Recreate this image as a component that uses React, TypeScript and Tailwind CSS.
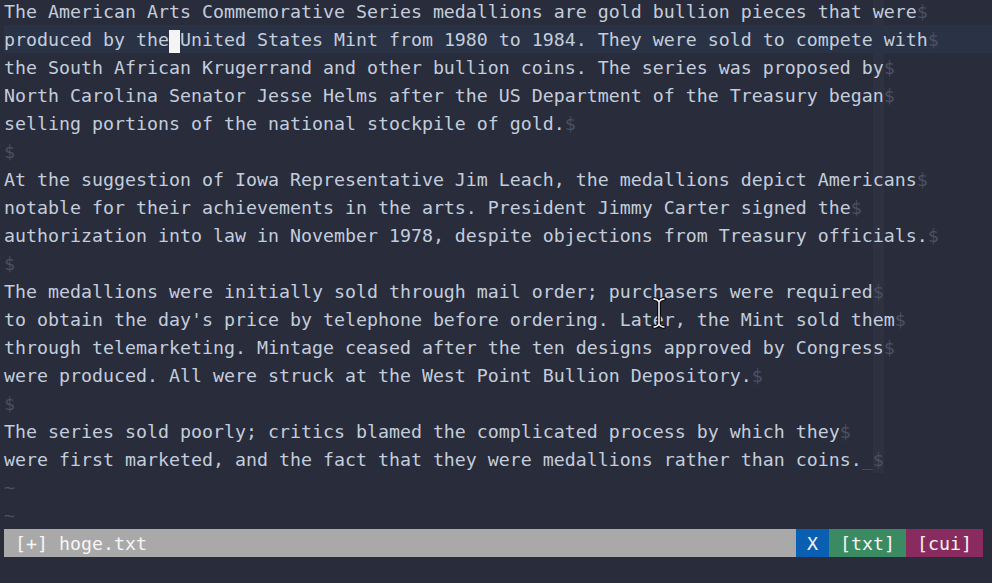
import React from 'react';

const lines: string[] = [
  'The American Arts Commemorative Series medallions are gold bullion pieces that were',
  'produced by the United States Mint from 1980 to 1984. They were sold to compete with',
  'the South African Krugerrand and other bullion coins. The series was proposed by',
  'North Carolina Senator Jesse Helms after the US Department of the Treasury began',
  'selling portions of the national stockpile of gold.',
  '',
  'At the suggestion of Iowa Representative Jim Leach, the medallions depict Americans',
  'notable for their achievements in the arts. President Jimmy Carter signed the',
  'authorization into law in November 1978, despite objections from Treasury officials.',
  '',
  'The medallions were initially sold through mail order; purchasers were required',
  "to obtain the day's price by telephone before ordering. Later, the Mint sold them",
  'through telemarketing. Mintage ceased after the ten designs approved by Congress',
  'were produced. All were struck at the West Point Bullion Depository.',
  '',
  'The series sold poorly; critics blamed the complicated process by which they',
  'were first marketed, and the fact that they were medallions rather than coins.',
];

const CURSOR_ROW = 1;
const CURSOR_COL = 15;

const Line = ({ text, idx }: { text: string; idx: number }) => {
  const isCursorRow = idx === CURSOR_ROW;
  const trailing = idx === lines.length - 1;
  return (
    <div className={`relative h-[28px] ${isCursorRow ? 'bg-[#2a3346]' : ''}`}>
      {/* colorcolumn at col 80 */}
      {!isCursorRow && <div className="absolute left-[869px] top-0 h-full w-[11px] bg-[#2e3140]" />}
      <div className="relative pt-[1px] whitespace-pre">
        {isCursorRow ? (
          <>
            {text.slice(0, CURSOR_COL)}
            <span className="inline-block h-[23px] w-[11px] bg-[#f4f4f4] align-middle" />
            {text.slice(CURSOR_COL + 1)}
          </>
        ) : (
          text
        )}
        {trailing && <span className="text-[#5a6070]">_</span>}
        <span className="text-[#4a5060]">$</span>
      </div>
    </div>
  );
};

const App = () => {
  return (
    <div
      className="relative h-[583px] w-[992px] overflow-hidden bg-[#292c3b] text-[18.27px] leading-[27px] text-[#c3cddc]"
      style={{ fontFamily: '"DejaVu Sans Mono", monospace' }}
    >
      <div className="-mt-[3px] pl-[4px]">
        {lines.map((l, i) => (
          <Line key={i} text={l} idx={i} />
        ))}
        <div className="h-[28px] pt-[1px] text-[#4a5060]">~</div>
        <div className="h-[28px] pt-[1px] text-[#4a5060]">~</div>

        {/* status line */}
        <div className="flex h-[28px] w-[979px] bg-[#a9a9a9] pt-[1px] text-[#f6f6f6] whitespace-pre">
          <div className="flex-1">{' [+] hoge.txt'}</div>
          <div className="-mt-[1px] bg-[#0b5fb3] pt-[1px]">{' X '}</div>
          <div className="-mt-[1px] bg-[#3a8a62] pt-[1px]">{' [txt] '}</div>
          <div className="-mt-[1px] bg-[#8a2b5f] pt-[1px]">{' [cui] '}</div>
        </div>
        <div className="h-[28px]" />
      </div>

      {/* mouse I-beam pointer */}
      <svg className="absolute left-[651px] top-[297px]" width="16" height="32" viewBox="0 0 16 32">
        <path
          d="M3 2 C6 2 7 3 8 5 C9 3 10 2 13 2 M8 5 L8 27 M3 30 C6 30 7 29 8 27 C9 29 10 30 13 30"
          fill="none"
          stroke="#000"
          strokeWidth="3.5"
          strokeLinecap="round"
        />
        <path
          d="M3 2 C6 2 7 3 8 5 C9 3 10 2 13 2 M8 5 L8 27 M3 30 C6 30 7 29 8 27 C9 29 10 30 13 30"
          fill="none"
          stroke="#fff"
          strokeWidth="1.5"
          strokeLinecap="round"
        />
      </svg>
    </div>
  );
};

export default App;
